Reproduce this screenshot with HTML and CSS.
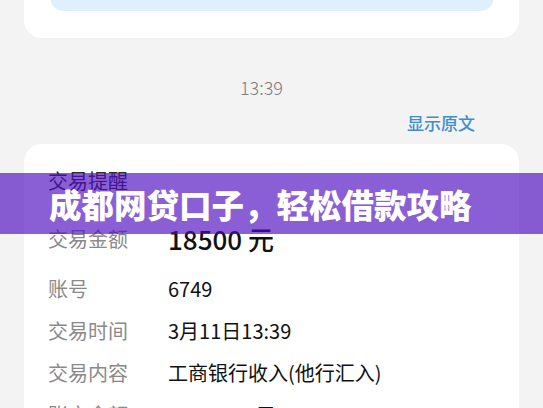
FILE: index.html
```html
<!DOCTYPE html>
<html lang="zh-CN">
<head>
    <meta charset="UTF-8">
    <meta name="viewport" content="width=device-width, initial-scale=1.0">
    <title>成都网贷口子，轻松借款攻略</title>
    <link rel="stylesheet" href="styles.css">
</head>
<body>

    <div class="page">

        <div class="top-card">
            <div class="top-link">查看详情</div>
        </div>

        <div class="time">13:39</div>
        <div class="original">显示原文</div>

        <div class="msg-card">
            <h2 class="msg-title">交易提醒</h2>
            <div class="row row-amount">
                <span class="label">交易金额</span>
                <span class="value amount">18500 元</span>
            </div>
            <div class="row">
                <span class="label">账号</span>
                <span class="value">6749</span>
            </div>
            <div class="row">
                <span class="label">交易时间</span>
                <span class="value">3月11日13:39</span>
            </div>
            <div class="row">
                <span class="label">交易内容</span>
                <span class="value">工商银行收入(他行汇入)</span>
            </div>
            <div class="row">
                <span class="label">账户余额</span>
                <span class="value">24712.38 元</span>
            </div>
        </div>

    </div>

    <div class="banner">成都网贷口子，轻松借款攻略</div>

</body>
</html>
```

FILE: styles.css
```css
body {
    font-family: "Noto Sans CJK SC", "Noto Sans", sans-serif;
    margin: 0;
    padding: 0;
    background-color: #f3f3f3;
    overflow: hidden;
    height: 408px;
}

.page {
    padding: 0 24px;
}

.top-card {
    margin-top: -60px;
    padding: 0 25px 27px 26px;
    background-color: #fff;
    border-radius: 0 0 18px 18px;
}

.top-link {
    height: 71px;
    box-sizing: border-box;
    padding: 38px 0 0 0;
    text-align: center;
    font-size: 18px;
    line-height: 20px;
    color: #5aaef0;
    background-color: #dff0fc;
    border-radius: 0 0 14px 14px;
}

.time {
    margin-top: 39px;
    padding-right: 20px;
    text-align: center;
    font-size: 18px;
    line-height: 20px;
    font-weight: 300;
    color: #7a7a7a;
}

.original {
    margin-top: 15px;
    padding-right: 44px;
    text-align: right;
    font-size: 17px;
    line-height: 22px;
    font-weight: 500;
    color: #3d8ed0;
}

.msg-card {
    margin-top: 10px;
    padding: 24px 24px 0 24px;
    background-color: #fff;
    border-radius: 18px 18px 0 0;
    height: 300px;
}

.msg-title {
    margin: 0;
    font-size: 20px;
    line-height: 26px;
    font-weight: 400;
    color: #2a2a2a;
}

.row {
    display: flex;
    align-items: center;
    height: 42px;
}

.row-amount {
    margin-top: 24px;
    height: 40px;
    margin-bottom: 9px;
}

.label {
    width: 120px;
    font-size: 20px;
    color: #8a8a8a;
}

.value {
    font-size: 20px;
    color: #111;
}

.amount {
    font-size: 26px;
    font-weight: 500;
}

.banner {
    position: absolute;
    left: 0;
    right: 0;
    top: 173px;
    height: 61px;
    box-sizing: border-box;
    padding-left: 49px;
    display: flex;
    align-items: center;
    background-color: rgba(78, 12, 192, 0.66);
    color: #fff;
    font-size: 32.5px;
    font-weight: 900;
}
```
